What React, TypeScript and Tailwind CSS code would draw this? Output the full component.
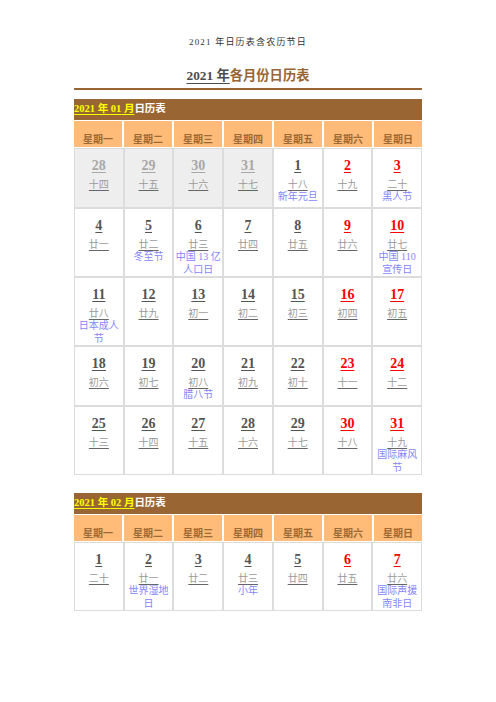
import React from "react";

type Day = { n: number; l: string; f?: string; red?: boolean; prev?: boolean };

const jan: Day[][] = [
  [
    { n: 28, l: "十四", prev: true },
    { n: 29, l: "十五", prev: true },
    { n: 30, l: "十六", prev: true },
    { n: 31, l: "十七", prev: true },
    { n: 1, l: "十八", f: "新年元旦" },
    { n: 2, l: "十九", red: true },
    { n: 3, l: "二十", f: "黑人节", red: true },
  ],
  [
    { n: 4, l: "廿一" },
    { n: 5, l: "廿二", f: "冬至节" },
    { n: 6, l: "廿三", f: "中国 13 亿人口日" },
    { n: 7, l: "廿四" },
    { n: 8, l: "廿五" },
    { n: 9, l: "廿六", red: true },
    { n: 10, l: "廿七", f: "中国 110 宣传日", red: true },
  ],
  [
    { n: 11, l: "廿八", f: "日本成人节" },
    { n: 12, l: "廿九" },
    { n: 13, l: "初一" },
    { n: 14, l: "初二" },
    { n: 15, l: "初三" },
    { n: 16, l: "初四", red: true },
    { n: 17, l: "初五", red: true },
  ],
  [
    { n: 18, l: "初六" },
    { n: 19, l: "初七" },
    { n: 20, l: "初八", f: "腊八节" },
    { n: 21, l: "初九" },
    { n: 22, l: "初十" },
    { n: 23, l: "十一", red: true },
    { n: 24, l: "十二", red: true },
  ],
  [
    { n: 25, l: "十三" },
    { n: 26, l: "十四" },
    { n: 27, l: "十五" },
    { n: 28, l: "十六" },
    { n: 29, l: "十七" },
    { n: 30, l: "十八", red: true },
    { n: 31, l: "十九", f: "国际麻风节", red: true },
  ],
];

const feb: Day[][] = [
  [
    { n: 1, l: "二十" },
    { n: 2, l: "廿一", f: "世界湿地日" },
    { n: 3, l: "廿二" },
    { n: 4, l: "廿三", f: "小年" },
    { n: 5, l: "廿四" },
    { n: 6, l: "廿五", red: true },
    { n: 7, l: "廿六", f: "国际声援南非日", red: true },
  ],
];

const weekdays = ["星期一", "星期二", "星期三", "星期四", "星期五", "星期六", "星期日"];

function Cell({ d }: { d: Day }) {
  const numColor = d.prev
    ? "text-[#a8a8a8]"
    : d.red
    ? "text-[#ff0000]"
    : "text-[#555555]";
  return (
    <div
      className={
        "flex flex-col items-center text-center pt-[7px] px-[1px] min-h-[58px] " +
        (d.prev ? "bg-[#eeeeee]" : "bg-white")
      }
    >
      <span
        className={
          "font-bold text-[14px] leading-[19px] underline underline-offset-[2px] " + numColor
        }
      >
        {d.n}
      </span>
      <span className="mt-[3px] text-[10px] leading-[13px] text-[#9a9a9a] underline decoration-[#666666] underline-offset-[2px]">
        {d.l}
      </span>
      {d.f && (
        <span className="text-[10px] leading-[12.5px] text-[#8585ff] break-all">{d.f}</span>
      )}
    </div>
  );
}

function Month({ m, rows }: { m: string; rows: Day[][] }) {
  return (
    <div className="flex flex-col">
      <div className="h-[21px] bg-[#996633] pt-[3px] text-[10.5px] leading-[14px] font-bold">
        <span className="text-[#ffff00] underline underline-offset-[2px]">2021 年 {m} 月</span>
        <span className="text-white">日历表</span>
      </div>
      <div className="mt-[1px] grid grid-cols-7 gap-[2px] bg-white">
        {weekdays.map((w) => (
          <div
            key={w}
            className="h-[26px] bg-[#ffbb77] pt-[11px] text-center text-[10px] leading-[15px] font-bold text-[#9c6a36]"
          >
            {w}
          </div>
        ))}
      </div>
      <div className="mt-[1px] grid grid-cols-7 gap-[2px] bg-[#dcdcdc] p-[1px]">
        {rows.flat().map((d, i) => (
          <Cell key={i} d={d} />
        ))}
      </div>
    </div>
  );
}

export default function App() {
  return (
    <div
      className="w-[496px] min-h-[702px] bg-white"
      style={{ fontFamily: '"Liberation Serif", "Noto Sans CJK SC", serif' }}
    >
      <div className="pt-[36px] text-center text-[9px] leading-[12px] tracking-[1.2px] text-[#333333]">
        2021 年日历表含农历节日
      </div>
      <div className="mx-auto w-[348px]">
        <div className="mt-[19px] text-center text-[13.3px] leading-[18px] font-bold">
          <span className="text-[#4d4d4d] underline underline-offset-[3px]">2021 年</span>
          <span className="text-[#996633]">各月份日历表</span>
        </div>
        <div className="mt-[3px] h-[2px] bg-[#996633]" />
        <div className="mt-[9px]">
          <Month m="01" rows={jan} />
        </div>
        <div className="mt-[18px]">
          <Month m="02" rows={feb} />
        </div>
      </div>
    </div>
  );
}
